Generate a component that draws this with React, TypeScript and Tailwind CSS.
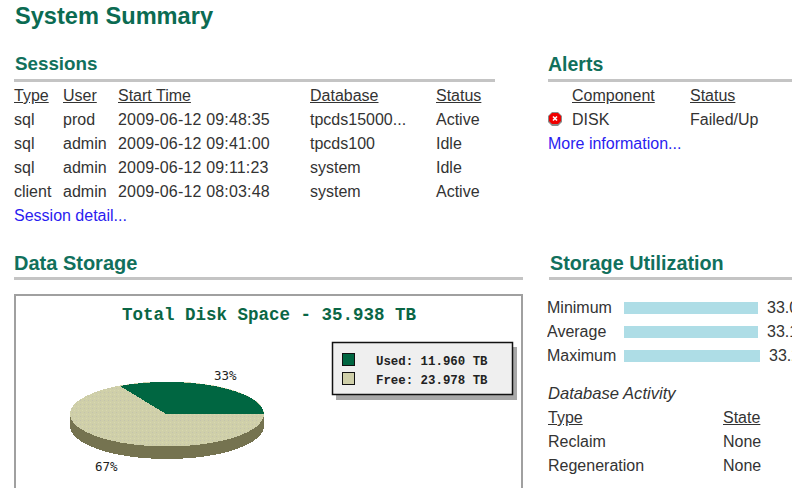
const sessions = [
  ["sql", "prod", "2009-06-12 09:48:35", "tpcds15000...", "Active"],
  ["sql", "admin", "2009-06-12 09:41:00", "tpcds100", "Idle"],
  ["sql", "admin", "2009-06-12 09:11:23", "system", "Idle"],
  ["client", "admin", "2009-06-12 08:03:48", "system", "Active"],
];

const sessionCols = "grid grid-cols-[49px_55px_192px_126px_1fr] h-6 items-center";

function Heading({ title, extra }: { title: string; extra: string }) {
  return (
    <h2 className={`h-[34px] border-b-[3px] border-[#c4c4c4] font-bold text-[#11705c] ${extra}`}>
      {title}
    </h2>
  );
}

function ErrorIcon() {
  return (
    <svg width="16" height="16" viewBox="0 0 16 16" className="-mt-[2px] -ml-px">
      <path d="M5 1h6l4 4v6l-4 4H5l-4-4V5z" fill="#8a8a8a" />
      <path d="M5 2h6l3 3v5l-3 3H5L2 10V5z" fill="#f00000" />
      <path d="M6 5.500l4 4M10 5.500l-4 4" stroke="#fff" strokeWidth="1.600" />
    </svg>
  );
}

function DiskChart() {
  return (
    <svg width="505" height="192" viewBox="0 0 505 192" className="block">
      <defs>
        <pattern id="dither" width="4" height="4" patternUnits="userSpaceOnUse">
          <rect width="4" height="4" fill="#cfcfa9" />
          <rect x="0" y="0" width="1" height="1" fill="#c3c3ad" />
          <rect x="2" y="2" width="1" height="1" fill="#d8d8b0" />
        </pattern>
      </defs>
      <text x="106" y="24" fontFamily="'Liberation Mono', monospace" fontWeight="700" fontSize="17.500" fill="#0a6645">
        Total Disk Space - 35.938 TB
      </text>

      {/* pie */}
      <g shapeRendering="crispEdges">
        <path d="M54 118v12a97 33 0 0 0 194 0v-12z" fill="#757350" />
        <ellipse cx="151" cy="118" rx="97" ry="32.500" fill="url(#dither)" />
        <path d="M150 118H248A97 32.500 0 0 0 104 90Z" fill="#006641" />
      </g>
      <text x="198" y="84" fontFamily="'DejaVu Sans Mono', monospace" fontSize="12.500" fill="#222">33%</text>
      <text x="79" y="175" fontFamily="'DejaVu Sans Mono', monospace" fontSize="12.500" fill="#222">67%</text>

      {/* legend */}
      <rect x="320" y="51" width="181" height="53" fill="#a8a8a8" />
      <rect x="316.500" y="46.500" width="180" height="52" fill="#efefef" stroke="#111" strokeWidth="1.500" />
      <rect x="326.500" y="57.500" width="12" height="12" fill="#006641" stroke="#111" />
      <rect x="326.500" y="76.500" width="12" height="12" fill="#cfcfa9" stroke="#111" />
      <text x="360" y="69" fontFamily="'Liberation Mono', monospace" fontWeight="700" fontSize="12.400" fill="#222">Used: 11.960 TB</text>
      <text x="360" y="88" fontFamily="'Liberation Mono', monospace" fontWeight="700" fontSize="12.400" fill="#222">Free: 23.978 TB</text>
    </svg>
  );
}

export default function App() {
  return (
    <div className="h-[488px] w-[792px] overflow-hidden bg-white pl-[14px] font-['Liberation_Sans',Arial,sans-serif] text-[16px] text-[#333]">
      <h1 className="h-8 pl-px text-[23.600px] leading-8 font-bold text-[#0b6b52]">System Summary</h1>

      <div className="mt-4 flex gap-[53px]">
        <section className="w-[481px] shrink-0">
          <Heading title="Sessions" extra="pl-px text-[18.800px] leading-[32px]" />
          <div className="mt-0.5">
            <div className={`${sessionCols} underline`}>
              <span>Type</span>
              <span>User</span>
              <span>Start Time</span>
              <span>Database</span>
              <span>Status</span>
            </div>
            {sessions.map((row, i) => (
              <div key={i} className={sessionCols}>
                {row.map((cell, j) => (
                  <span key={j} className={j == 2 ? "tracking-[0.17px]" : ""}>
                    {cell}
                  </span>
                ))}
              </div>
            ))}
            <a className="block h-6 leading-6 text-[#2a1cf0]">Session detail...</a>
          </div>
        </section>

        <section className="w-[244px] shrink-0">
          <Heading title="Alerts" extra="text-[19.500px] leading-[32px]" />
          <div className="mt-0.5">
            <div className="grid h-6 grid-cols-[24px_118px_1fr] items-center underline">
              <span />
              <span>Component</span>
              <span>Status</span>
            </div>
            <div className="grid h-6 grid-cols-[24px_118px_1fr] items-center">
              <ErrorIcon />
              <span>DISK</span>
              <span>Failed/Up</span>
            </div>
            <a className="block h-6 leading-6 text-[#2a1cf0]">More information...</a>
          </div>
        </section>
      </div>

      <div className="mt-[18px] flex gap-[26px]">
        <section className="w-[509px] shrink-0">
          <Heading title="Data Storage" extra="text-[20px] leading-[34px]" />
          <div className="mt-[14px] h-[230px] border-2 border-[#a0a0a0] bg-white">
            <DiskChart />
          </div>
        </section>

        <section className="w-[243px] shrink-0">
          <Heading title="Storage Utilization" extra="pl-px text-[19.800px] leading-[34px]" />
          <div className="mt-4 -ml-0.5 overflow-hidden">
            {[
              ["Minimum", "w-[134px]", "33.0%"],
              ["Average", "w-[134px]", "33.1%"],
              ["Maximum", "w-[136px]", "33.2%"],
            ].map(([label, width, value]) => (
              <div key={label} className="flex h-6 items-center whitespace-nowrap">
                <span className="w-[77px] shrink-0">{label}</span>
                <span className={`h-3 shrink-0 bg-[#aedde6] ${width}`} />
                <span className="ml-[9px]">{value}</span>
              </div>
            ))}
          </div>
          <p className="mt-3.5 -ml-px h-6 text-[16.600px] leading-6 italic">Database Activity</p>
          <div className="-ml-px grid grid-cols-[175px_1fr] leading-6">
            <span className="underline">Type</span>
            <span className="underline">State</span>
            <span>Reclaim</span>
            <span>None</span>
            <span>Regeneration</span>
            <span>None</span>
          </div>
        </section>
      </div>
    </div>
  );
}
